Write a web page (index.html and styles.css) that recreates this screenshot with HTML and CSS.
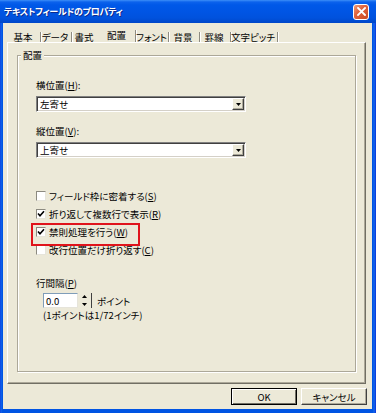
FILE: index.html
```html
<!DOCTYPE html>
<html lang="ja">
<head>
<meta charset="utf-8">
<title>テキストフィールドのプロパティ</title>
<link rel="stylesheet" href="styles.css">
</head>
<body>
<div class="window">
  <div class="titlebar">
    <span class="title">テキストフィールドのプロパティ</span>
    <span class="close"><svg width="9" height="9" viewBox="0 0 9 9"><path d="M1 1 L8 8 M8 1 L1 8" stroke="#fff" stroke-width="1.8" stroke-linecap="square"/></svg></span>
  </div>
  <div class="client">
    <div class="tabs">
      <div class="tab t1">基本</div>
      <div class="tab t2">データ</div>
      <div class="tab t3">書式</div>
      <div class="tab t4 selected">配置</div>
      <div class="tab t5">フォント</div>
      <div class="tab t6">背景</div>
      <div class="tab t7">罫線</div>
      <div class="tab t8">文字ピッチ</div>
    </div>
    <div class="panel">
      <div class="group">
        <div class="group-title">配置</div>
        <div class="field-label">横位置(<u>H</u>):</div>
        <div class="select">
          <span class="select-value">左寄せ</span>
          <span class="select-btn"><svg width="5" height="3" viewBox="0 0 5 3"><path d="M0 0 H5 L2.5 3 Z" fill="#000"/></svg></span>
        </div>
        <div class="field-label second">縦位置(<u>V</u>):</div>
        <div class="select">
          <span class="select-value">上寄せ</span>
          <span class="select-btn"><svg width="5" height="3" viewBox="0 0 5 3"><path d="M0 0 H5 L2.5 3 Z" fill="#000"/></svg></span>
        </div>
        <div class="checks">
          <div class="check-row"><span class="box"></span><span>フィールド枠に密着する(<u>S</u>)</span></div>
          <div class="check-row"><span class="box"><svg width="8" height="8" viewBox="0 0 8 8"><path d="M1 3.5 L3 5.8 L7 1.2" stroke="#000" stroke-width="1.6" fill="none"/></svg></span><span>折り返して複数行で表示(<u>R</u>)</span></div>
          <div class="check-row highlight"><span class="box"><svg width="8" height="8" viewBox="0 0 8 8"><path d="M1 3.5 L3 5.8 L7 1.2" stroke="#000" stroke-width="1.6" fill="none"/></svg></span><span>禁則処理を行う(<u>W</u>)</span></div>
          <div class="check-row"><span class="box"></span><span>改行位置だけ折り返す(<u>C</u>)</span></div>
        </div>
        <div class="field-label spacing">行間隔(<u>P</u>)</div>
        <div class="spin-row">
          <span class="spin-input">0.0</span>
          <span class="spin-btns">
            <span class="spin-half"><svg width="5" height="3" viewBox="0 0 5 3"><path d="M0 3 H5 L2.5 0 Z" fill="#000"/></svg></span>
            <span class="spin-half"><svg width="5" height="3" viewBox="0 0 5 3"><path d="M0 0 H5 L2.5 3 Z" fill="#000"/></svg></span>
          </span>
          <span class="unit">ポイント</span>
        </div>
        <div class="note">(1ポイントは1/72インチ)</div>
      </div>
    </div>
    <div class="buttons">
      <span class="btn default">OK</span>
      <span class="btn">キャンセル</span>
    </div>
  </div>
</div>
</body>
</html>
```

FILE: styles.css
```css
* { box-sizing: border-box; margin: 0; padding: 0; }
html, body { width: 376px; height: 413px; overflow: hidden; }
body {
  font-family: "Noto Sans CJK JP", "Noto Sans", sans-serif;
  font-size: 9.5px;
  font-feature-settings: "palt";
  color: #000;
  background: #fff;
}
u { text-decoration: underline; text-underline-offset: 1px; }

.window {
  width: 376px;
  height: 413px;
  display: flex;
  flex-direction: column;
  background: linear-gradient(to right, #0831D9 0, #166AEE 1px, #0054E3 2px, #0054E3 373px, #166AEE 374px, #0831D9 376px);
}

.titlebar {
  height: 23px;
  flex: none;
  display: flex;
  align-items: center;
  padding: 0 7px 0 4px;
  background: linear-gradient(to bottom, #3D8FF8 0px, #0C62EC 2px, #0058E8 5px, #0055E4 12px, #0052DD 18px, #0046C8 23px);
}
.title {
  flex: 1;
  color: #fff;
  font-weight: bold;
  font-size: 9px;
  letter-spacing: -0.3px;
  line-height: 12px;
  text-shadow: 1px 1px 0 #0A2A8C;
  white-space: nowrap;
}
.close {
  width: 16px;
  height: 16px;
  display: flex;
  align-items: center;
  justify-content: center;
  border: 1px solid #fff;
  border-radius: 3px;
  background: linear-gradient(135deg, #EE9A7A 0%, #E0643E 40%, #CC4A22 100%);
}

.client {
  flex: 1;
  margin: 0 4px 4px 3px;
  background: #ECE9D8;
  display: flex;
  flex-direction: column;
}

.tabs {
  height: 19px;
  flex: none;
  display: flex;
  padding-left: 5px;
}
.tab {
  margin-top: 9px;
  height: 10px;
  line-height: 10px;
  text-align: center;
  padding-right: 2px;
  white-space: nowrap;
  border-right: 1px solid #8D8B81;
  box-shadow: 1px 0 0 #fff;
}
.tab.selected {
  margin-top: 7px;
  height: 12px;
  padding-bottom: 2px;
  padding-left: 2px;
}
.t1 { width: 33px; }
.t2 { width: 31px; }
.t3 { width: 26px; border-right: none; box-shadow: none; }
.t4 { width: 38px; }
.t5 { width: 33px; }
.t6 { width: 31px; }
.t7 { width: 31px; }
.t8 { width: 47px; }

.panel {
  margin-left: 4px;
  width: 359px;
  height: 342px;
  flex: none;
  border: 1px solid;
  border-color: #FFFFFF #716F64 #716F64 #FFFFFF;
  box-shadow: inset -1px -1px 0 #ACA899;
  padding: 12px 9px 0 9px;
}

.group {
  height: 317px;
  border: 1px solid #ACA899;
  box-shadow: inset 1px 1px 0 #fff, 1px 1px 0 #fff;
  padding-left: 18px;
  display: flex;
  flex-direction: column;
  align-items: flex-start;
}
.group-title {
  margin: -7px 0 0 -15px;
  padding: 0 2px;
  line-height: 12px;
  background: #ECE9D8;
}

.field-label {
  margin-top: 18px;
  line-height: 12px;
}
.field-label.second { margin-top: 13px; }
.field-label.spacing { margin-top: 18px; }

.select {
  margin-top: 5px;
  width: 210px;
  height: 16px;
  display: flex;
  align-items: center;
  background: #fff;
  border: 1px solid;
  border-color: #808080 #FFFFFF #FFFFFF #808080;
  box-shadow: inset 1px 1px 0 #404040, inset -1px -1px 0 #D4D0C8;
}
.select-value {
  flex: 1;
  padding-left: 3px;
  line-height: 12px;
}
.select-btn {
  width: 12px;
  height: 12px;
  margin-right: 1px;
  display: flex;
  align-items: center;
  justify-content: center;
  background: #ECE9D8;
  border: 1px solid;
  border-color: #FFFFFF #404040 #404040 #FFFFFF;
  box-shadow: inset -1px -1px 0 #ACA899;
}

.checks {
  margin-top: 29px;
  display: flex;
  flex-direction: column;
}
.check-row {
  height: 18px;
  display: flex;
  align-items: center;
  gap: 3px;
  line-height: 12px;
  white-space: nowrap;
}
.check-row.highlight { position: relative; }
.check-row.highlight::after {
  content: "";
  position: absolute;
  left: -5px;
  top: 0px;
  width: 105px;
  height: 19px;
  border: 2px solid #E0141C;
}
.box {
  width: 10px;
  height: 10px;
  flex: none;
  display: flex;
  align-items: center;
  justify-content: center;
  background: #fff;
  border: 1px solid;
  border-color: #8C8A80 #E6E4DA #E6E4DA #8C8A80;
}

.spin-row {
  margin: 4px 0 0 7px;
  height: 15px;
  display: flex;
  align-items: center;
}
.spin-input {
  width: 35px;
  height: 15px;
  line-height: 12px;
  padding: 1px 0 0 2px;
  background: #fff;
  border: 1px solid;
  border-color: #7F9DB9 #E6E4DA #E6E4DA #7F9DB9;
}
.spin-btns {
  width: 14px;
  height: 15px;
  display: flex;
  flex-direction: column;
  border-right: 1px solid #404040;
}
.spin-half {
  flex: 1;
  display: flex;
  align-items: center;
  justify-content: center;
}
.unit {
  margin-left: 5px;
  line-height: 12px;
}
.note {
  margin: 1px 0 0 7px;
  line-height: 12px;
}

.buttons {
  margin-top: 4px;
  padding-right: 5px;
  display: flex;
  justify-content: flex-end;
  gap: 4px;
}
.btn {
  width: 66px;
  height: 17px;
  display: flex;
  align-items: center;
  justify-content: center;
  line-height: 12px;
  background: #ECE9D8;
  border: 1px solid;
  border-color: #FFFFFF #404040 #404040 #FFFFFF;
  box-shadow: inset -1px -1px 0 #ACA899;
}
.btn.default {
  border: 1px solid #000;
  box-shadow: inset 1px 1px 0 #fff, inset -1px -1px 0 #716F64;
}
```
